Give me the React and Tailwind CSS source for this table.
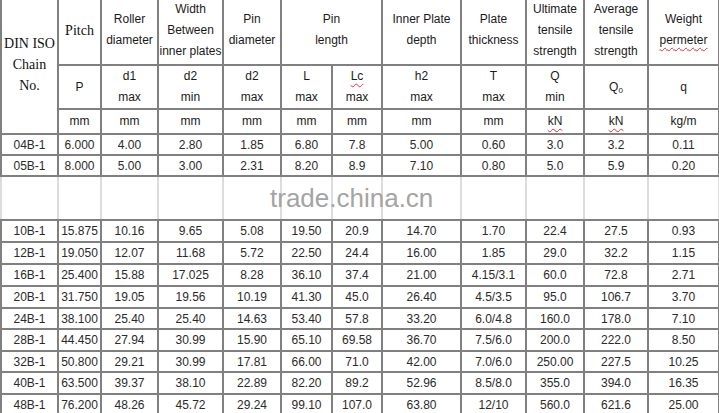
import React from "react";

const SANS = { fontFamily: '"Liberation Sans", Arial, sans-serif' };

// chain rows, h = row height in px (line centre to line centre)
const TOP_ROWS = [
  { h: "h-[21px]", v: ["04B-1", "6.000", "4.00", "2.80", "1.85", "6.80", "7.8", "5.00", "0.60", "3.0", "3.2", "0.11"] },
  { h: "h-[21px]", v: ["05B-1", "8.000", "5.00", "3.00", "2.31", "8.20", "8.9", "7.10", "0.80", "5.0", "5.9", "0.20"] },
];

const BOTTOM_ROWS = [
  { h: "h-[22px]", v: ["10B-1", "15.875", "10.16", "9.65", "5.08", "19.50", "20.9", "14.70", "1.70", "22.4", "27.5", "0.93"] },
  { h: "h-[22px]", v: ["12B-1", "19.050", "12.07", "11.68", "5.72", "22.50", "24.4", "16.00", "1.85", "29.0", "32.2", "1.15"] },
  { h: "h-[22px]", v: ["16B-1", "25.400", "15.88", "17.025", "8.28", "36.10", "37.4", "21.00", "4.15/3.1", "60.0", "72.8", "2.71"] },
  { h: "h-[22px]", v: ["20B-1", "31.750", "19.05", "19.56", "10.19", "41.30", "45.0", "26.40", "4.5/3.5", "95.0", "106.7", "3.70"] },
  { h: "h-[21px]", v: ["24B-1", "38.100", "25.40", "25.40", "14.63", "53.40", "57.8", "33.20", "6.0/4.8", "160.0", "178.0", "7.10"] },
  { h: "h-[22px]", v: ["28B-1", "44.450", "27.94", "30.99", "15.90", "65.10", "69.58", "36.70", "7.5/6.0", "200.0", "222.0", "8.50"] },
  { h: "h-[21px]", v: ["32B-1", "50.800", "29.21", "30.99", "17.81", "66.00", "71.0", "42.00", "7.0/6.0", "250.00", "227.5", "10.25"] },
  { h: "h-[22px]", v: ["40B-1", "63.500", "39.37", "38.10", "22.89", "82.20", "89.2", "52.96", "8.5/8.0", "355.0", "394.0", "16.35"] },
  { h: "h-[21px]", v: ["48B-1", "76.200", "48.26", "45.72", "29.24", "99.10", "107.0", "63.80", "12/10", "560.0", "621.6", "25.00"] },
];

const cell = "border-2 border-[#808080] p-0 text-center align-middle whitespace-nowrap";
const head = cell + " text-[12px] leading-[21px] text-[#1a1a1a]";
const wavy = "underline decoration-wavy decoration-[#e03030] decoration-1 underline-offset-[3px]";

function DataRow({ row }) {
  return (
    <tr className={row.h}>
      {row.v.map((val, i) => (
        <td key={i} className={cell + " text-[12px] leading-none text-[#2a2a2a]"}>
          {val}
        </td>
      ))}
    </tr>
  );
}

export default function App() {
  return (
    <div className="relative flex flex-col w-[719px] h-[413px] overflow-hidden bg-white" style={SANS}>
      <table className="table-fixed border-collapse w-[718px] mt-[-6px] border-t-0">
        <colgroup>
          <col className="w-[57px]" />
          <col className="w-[43px]" />
          <col className="w-[57px]" />
          <col className="w-[65px]" />
          <col className="w-[58px]" />
          <col className="w-[51px]" />
          <col className="w-[50px]" />
          <col className="w-[79px]" />
          <col className="w-[65px]" />
          <col className="w-[58px]" />
          <col className="w-[64px]" />
          <col className="w-[71px]" />
        </colgroup>
        <thead>
          <tr className="h-[70px]">
            <td
              rowSpan={3}
              className={cell + " text-[14px] leading-[21px] text-[#111]"}
              style={{ fontFamily: '"Liberation Serif", "Times New Roman", serif' }}
            >
              DIN ISO
              <br />
              Chain
              <br />
              No.
            </td>
            <td className={cell + " text-[14px] text-[#111]"} style={{ fontFamily: '"Liberation Serif", "Times New Roman", serif' }}>
              Pitch
            </td>
            <td className={head}>Roller<br />diameter</td>
            <td className={head}>Width<br />Between<br />inner plates</td>
            <td className={head}>Pin<br />diameter</td>
            <td colSpan={2} className={head}>Pin<br />length</td>
            <td className={head}>Inner Plate<br />depth</td>
            <td className={head}>Plate<br />thickness</td>
            <td className={head}>Ultimate<br />tensile<br />strength</td>
            <td className={head}>Average<br />tensile<br />strength</td>
            <td className={head}>
              Weight
              <br />
              <span className={wavy}>permeter</span>
            </td>
          </tr>
          <tr className="h-[43px]">
            <td className={head}>P</td>
            <td className={head}>d1<br />max</td>
            <td className={head}>d2<br />min</td>
            <td className={head}>d2<br />max</td>
            <td className={head}>L<br />max</td>
            <td className={head}>
              <span className={wavy}>Lc</span>
              <br />
              max
            </td>
            <td className={head}>h2<br />max</td>
            <td className={head}>T<br />max</td>
            <td className={head}>Q<br />min</td>
            <td className={head}>
              Q<sub className="text-[8px] align-baseline relative top-[2px]">0</sub>
            </td>
            <td className={head}>q</td>
          </tr>
          <tr className="h-[25px]">
            <td className={head}>mm</td>
            <td className={head}>mm</td>
            <td className={head}>mm</td>
            <td className={head}>mm</td>
            <td className={head}>mm</td>
            <td className={head}>mm</td>
            <td className={head}>mm</td>
            <td className={head}>mm</td>
            <td className={head}><span className={wavy}>kN</span></td>
            <td className={head}><span className={wavy}>kN</span></td>
            <td className={head}>kg/m</td>
          </tr>
        </thead>
        <tbody>
          {TOP_ROWS.map((r) => (
            <DataRow key={r.v[0]} row={r} />
          ))}
          {/* blank row behind the watermark, lines faded */}
          <tr className="h-[44px]">
            {Array.from({ length: 12 }).map((_, i) => (
              <td
                key={i}
                className="p-0 border-y-2 border-y-[#808080] border-x-2 border-x-[#dcdcdc]"
              />
            ))}
          </tr>
          {BOTTOM_ROWS.map((r) => (
            <DataRow key={r.v[0]} row={r} />
          ))}
        </tbody>
      </table>

      {/* watermark */}
      <div className="absolute left-[270px] top-[185px] text-[26px] leading-none text-[#a4a4a4] pointer-events-none">
        trade.china.cn
      </div>
    </div>
  );
}
